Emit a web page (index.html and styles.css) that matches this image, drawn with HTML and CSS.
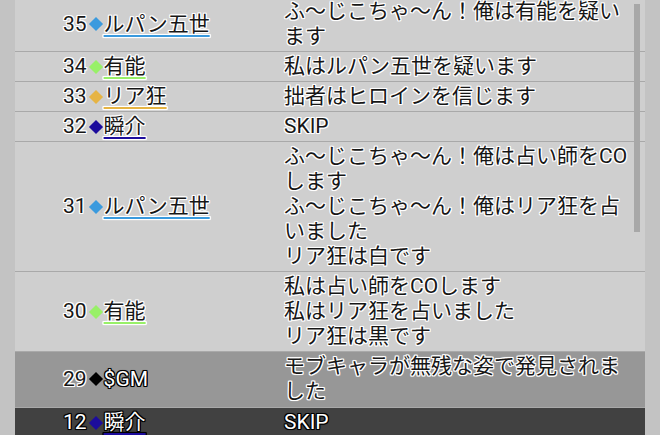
FILE: index.html
```html
<!DOCTYPE html>
<html lang="ja">
<head>
  <meta charset="UTF-8" />
  <meta name="viewport" content="width=device-width, initial-scale=1.0"/>
  <title>ログ</title>
  <link rel="stylesheet" href="styles.css">
</head>
<body>
  <div class="log">
    <div class="scroll-thumb"></div>
    <div class="log-list">

      <div class="row">
        <div class="who">35<span class="mark c-lupin"></span><span class="name c-lupin">ルパン五世</span></div>
        <div class="msg">ふ〜じこちゃ〜ん！俺は有能を疑います</div>
      </div>

      <div class="row">
        <div class="who">34<span class="mark c-yuno"></span><span class="name c-yuno">有能</span></div>
        <div class="msg">私はルパン五世を疑います</div>
      </div>

      <div class="row">
        <div class="who">33<span class="mark c-ria"></span><span class="name c-ria">リア狂</span></div>
        <div class="msg">拙者はヒロインを信じます</div>
      </div>

      <div class="row">
        <div class="who">32<span class="mark c-shun"></span><span class="name c-shun">瞬介</span></div>
        <div class="msg">SKIP</div>
      </div>

      <div class="row">
        <div class="who">31<span class="mark c-lupin"></span><span class="name c-lupin">ルパン五世</span></div>
        <div class="msg">ふ〜じこちゃ〜ん！俺は占い師をCOします<br>ふ〜じこちゃ〜ん！俺はリア狂を占いました<br>リア狂は白です</div>
      </div>

      <div class="row">
        <div class="who">30<span class="mark c-yuno"></span><span class="name c-yuno">有能</span></div>
        <div class="msg">私は占い師をCOします<br>私はリア狂を占いました<br>リア狂は黒です</div>
      </div>

      <div class="row row-gm">
        <div class="who">29<span class="mark c-gm"></span><span class="name gm">$GM</span></div>
        <div class="msg">モブキャラが無残な姿で発見されました</div>
      </div>

      <div class="row row-dark">
        <div class="who">12<span class="mark c-shun"></span><span class="name c-shun">瞬介</span></div>
        <div class="msg">SKIP</div>
      </div>

    </div>
  </div>
</body>
</html>
```

FILE: styles.css
```css
body {
  margin: 0;
  background: #c3c3c3;
  font-family: Roboto, "Noto Sans CJK JP", sans-serif;
  font-size: 21px;
  color: #161616;
  overflow: hidden;
}
.log {
  position: relative;
  margin-left: 15px;
  width: 630px;
  height: 435px;
  background: #cfcfcf;
  overflow: hidden;
}
.log-list {
  margin-top: -3px;
}
.scroll-thumb {
  position: absolute;
  left: 619px;
  top: 4px;
  width: 6px;
  height: 228px;
  background: #a8a8a8;
  z-index: 2;
}
.row {
  display: grid;
  grid-template-columns: 269px 352px;
  align-items: center;
  padding: 2px 0;
  border-bottom: 1px solid #a9a9a9;
  line-height: 25px;
  text-shadow: 1px 0 0 #fff, -1px 0 0 #fff, 0 1px 0 #fff, 0 -1px 0 #fff,
    1px 1px 0 #fff, -1px -1px 0 #fff, 1px -1px 0 #fff, -1px 1px 0 #fff,
    0 0 2px #fff, 0 0 2px #fff;
}
.who {
  display: flex;
  align-items: center;
  padding-left: 48px;
  white-space: nowrap;
}
.mark {
  display: inline-block;
  width: 10px;
  height: 10px;
  margin: 0 3px 0 4px;
  transform: rotate(45deg);
}
.name {
  text-decoration: underline 2px;
  text-underline-offset: 4px;
}
.msg {
  padding-right: 2px;
}
.c-lupin { text-decoration-color: #3a9ade; }
.mark.c-lupin { background: #3a9ade; }
.c-yuno { text-decoration-color: #98f068; }
.mark.c-yuno { background: #98f068; }
.c-ria { text-decoration-color: #e6b444; }
.mark.c-ria { background: #e6b444; }
.c-shun { text-decoration-color: #1c0c9c; }
.mark.c-shun { background: #1c0c9c; }
.mark.c-gm { background: #000; }
.row-gm {
  background: #979797;
  padding: 2px 0 3px;
}
.name.gm,
.row-dark,
.row-dark .name {
  color: #fff;
  text-shadow: 1px 0 0 #000, -1px 0 0 #000, 0 1px 0 #000, 0 -1px 0 #000,
    1px 1px 0 #000, -1px -1px 0 #000, 1px -1px 0 #000, -1px 1px 0 #000,
    0 0 2px #000;
}
.name.gm {
  text-decoration: none;
}
.row-dark {
  background: #414141;
  border-bottom: none;
}
```
